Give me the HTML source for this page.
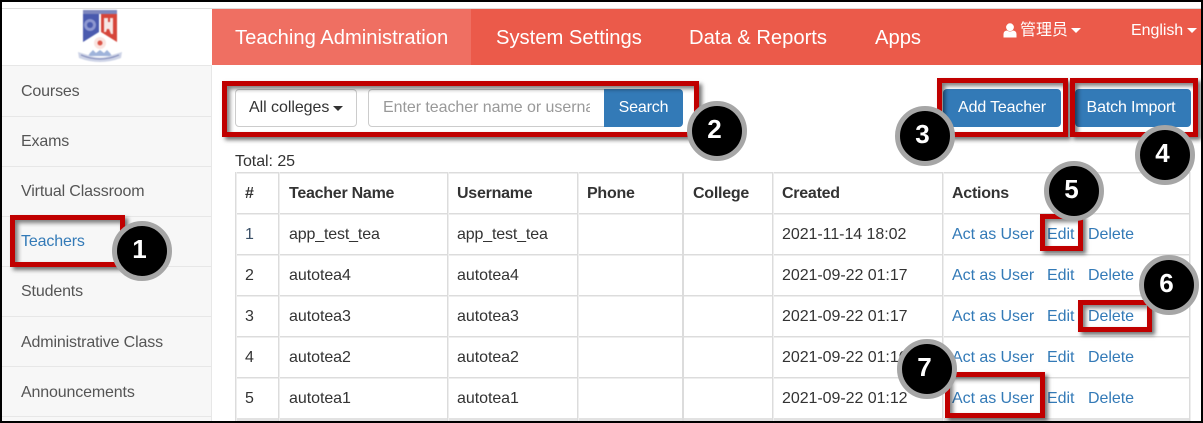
<!DOCTYPE html>
<html><head><meta charset="utf-8"><style>
html,body{margin:0;padding:0;width:1203px;height:423px;overflow:hidden;background:#fff}
body{position:relative;font-family:"Liberation Sans","Noto Sans CJK SC",sans-serif;font-size:16px;color:#333}
.a{position:absolute}
.t{position:absolute;white-space:nowrap;line-height:20px;height:20px;letter-spacing:-.05px}
.h{font-weight:bold;letter-spacing:-.25px}
.l{color:#337ab7}
.s{color:#555;left:21px;letter-spacing:-.15px}
.n{color:#fff;font-size:20.2px;line-height:28px;height:28px;top:24px;letter-spacing:0}
.hl{position:absolute;height:2px;left:235px;width:956px;background:linear-gradient(#dcdcdc 50%,#eeeeee 50%)}
.vl{position:absolute;width:2px;top:172px;height:249px;background:linear-gradient(90deg,#dcdcdc 50%,#eeeeee 50%)}
.sl{position:absolute;background:#e7e7e7;height:1px;left:2px;width:209px}
.btn{position:absolute;background:#337ab7;border-radius:4px;color:#fff;text-align:center;line-height:38px;height:38px;top:89px;letter-spacing:-.15px}
.box{position:absolute;box-sizing:border-box;border:5px solid #c00000;box-shadow:3px 3px 4px rgba(0,0,0,.55),inset 3px 3px 4px rgba(0,0,0,.5)}
.c{position:absolute;box-sizing:border-box;width:60px;height:60px;border-radius:50%;background:#000;border:5px solid #a6a6a6;color:#fff;font-weight:bold;font-size:26px;line-height:46px;text-align:center;text-indent:-5px}
.car{position:absolute;width:0;height:0;border-left:5px solid transparent;border-right:5px solid transparent;border-top:5px solid #fff}
</style></head><body>

<!-- sidebar -->
<div class="a" style="left:2px;top:66px;width:209px;height:355px;background:#f7f7f7"></div>
<div class="a" style="left:211px;top:66px;width:1px;height:355px;background:#e7e7e7"></div>
<div class="a" style="left:2px;top:8px;width:1199px;height:1px;background:#ddd"></div>
<div class="sl" style="top:65px;width:210px"></div>
<div class="sl" style="top:116px"></div><div class="sl" style="top:166px"></div><div class="sl" style="top:216px"></div><div class="sl" style="top:266px"></div><div class="sl" style="top:316px"></div><div class="sl" style="top:366px"></div><div class="sl" style="top:416px"></div>
<div class="t s" style="top:82px">Courses</div>
<div class="t s" style="top:132px">Exams</div>
<div class="t s" style="top:182px">Virtual Classroom</div>
<div class="t s" style="top:232px;color:#337ab7">Teachers</div>
<div class="t s" style="top:282px">Students</div>
<div class="t s" style="top:333px">Administrative Class</div>
<div class="t s" style="top:383px">Announcements</div>

<!-- logo -->
<svg class="a" style="left:76px;top:8px;filter:blur(.5px)" width="48" height="58" viewBox="0 0 48 58">
<path d="M7 2H41V34Q41 42 24 48Q7 42 7 34Z" fill="#fff"/>
<rect x="7" y="2" width="34" height="4" fill="#7d86bd"/>
<path d="M7 6H23V24L7 34Z" fill="#4a5aae"/>
<path d="M25 6H41V34L25 24Z" fill="#d6453a"/>
<circle cx="14" cy="17" r="6" fill="#8d97d0"/><circle cx="14" cy="17" r="3" fill="#4a5aae"/>
<path d="M28 10h4v4h2v-4h3v16h-2l-2-5h-2l-1 3h-2z" fill="#f6e6e4"/>
<circle cx="24" cy="35" r="6" fill="#f9e4e0"/><circle cx="24" cy="35" r="2.5" fill="#dc5448"/>
<path d="M14 45L17 42L20 45L24 42L28 45L31 42L34 45L36 48H12Z" fill="#9fb3da"/>
<path d="M2 44L12 47Q24 52 36 47L46 44L45 50Q24 58 3 50Z" fill="#cdd3e6"/>
<path d="M5 47Q24 55 43 47" fill="none" stroke="#7f88b8" stroke-width="1"/>
</svg>

<!-- nav -->
<div class="a" style="left:212px;top:9px;width:989px;height:56px;background:#eb5a4a"></div>
<div class="a" style="left:212px;top:9px;width:259px;height:56px;background:#ef6f62"></div>
<div class="t n" style="left:235px">Teaching Administration</div>
<div class="t n" style="left:496px">System Settings</div>
<div class="t n" style="left:689px">Data &amp; Reports</div>
<div class="t n" style="left:875px">Apps</div>
<svg class="a" style="left:1003px;top:23px" width="14" height="15" viewBox="0 0 14 15"><circle cx="7" cy="4.2" r="3.9" fill="#fff"/><path d="M0.5 14.5V11Q0.5 8 4 7.5Q7 9.5 10 7.5Q13.5 8 13.5 11V14.5Z" fill="#fff"/></svg>
<div class="t" style="left:1020px;top:21px;color:#fff">管理员</div>
<div class="car" style="left:1071px;top:28px"></div>
<div class="t" style="left:1131px;top:21px;color:#fff">English</div>
<div class="car" style="left:1187px;top:28px"></div>

<!-- controls -->
<div class="a" style="left:235px;top:89px;width:122px;height:38px;box-sizing:border-box;border:1px solid #ccc;border-radius:4px"></div>
<div class="t" style="left:249px;top:98px">All colleges</div>
<div class="car" style="left:333px;top:106px;border-top-color:#333"></div>
<div class="a" style="left:368px;top:89px;width:240px;height:38px;box-sizing:border-box;border:1px solid #ccc;border-radius:4px"></div>
<div class="t" style="left:383px;top:98px;width:207px;overflow:hidden;color:#999">Enter teacher name or username</div>
<div class="btn" style="left:604px;width:79px;border-radius:0 4px 4px 0">Search</div>
<div class="btn" style="left:943px;width:118px">Add Teacher</div>
<div class="btn" style="left:1075px;width:116px;text-indent:-4px">Batch Import</div>
<div class="t" style="left:235px;top:152px">Total: 25</div>

<!-- table -->
<div class="hl" style="top:172px"></div><div class="hl" style="top:213px"></div><div class="hl" style="top:254px"></div><div class="hl" style="top:295px"></div><div class="hl" style="top:336px"></div><div class="hl" style="top:377px"></div><div class="hl" style="top:418px;height:3px;background:#e2e2e2"></div>
<div class="vl" style="left:235px"></div><div class="vl" style="left:278px"></div><div class="vl" style="left:447px"></div><div class="vl" style="left:577px"></div><div class="vl" style="left:682px;background:#dcdcdc"></div><div class="vl" style="left:772px"></div><div class="vl" style="left:942px"></div><div class="vl" style="left:1189px"></div>

<div class="t h" style="left:245px;top:184px">#</div>
<div class="t h" style="left:289px;top:184px">Teacher Name</div>
<div class="t h" style="left:457px;top:184px">Username</div>
<div class="t h" style="left:587px;top:184px">Phone</div>
<div class="t h" style="left:693px;top:184px">College</div>
<div class="t h" style="left:782px;top:184px">Created</div>
<div class="t h" style="left:952px;top:184px">Actions</div>

<div class="t" style="left:245px;top:225px;color:#3a4f66">1</div>
<div class="t" style="left:289px;top:225px;letter-spacing:-.15px">app_test_tea</div><div class="t" style="left:457px;top:225px;letter-spacing:-.15px">app_test_tea</div><div class="t" style="left:782px;top:225px">2021-11-14 18:02</div>
<div class="t l" style="left:952px;top:225px">Act as User</div><div class="t l" style="left:1047px;top:225px">Edit</div><div class="t l" style="left:1088px;top:225px">Delete</div>

<div class="t" style="left:245px;top:266px">2</div>
<div class="t" style="left:289px;top:266px">autotea4</div><div class="t" style="left:457px;top:266px">autotea4</div><div class="t" style="left:782px;top:266px">2021-09-22 01:17</div>
<div class="t l" style="left:952px;top:266px">Act as User</div><div class="t l" style="left:1047px;top:266px">Edit</div><div class="t l" style="left:1088px;top:266px">Delete</div>

<div class="t" style="left:245px;top:307px">3</div>
<div class="t" style="left:289px;top:307px">autotea3</div><div class="t" style="left:457px;top:307px">autotea3</div><div class="t" style="left:782px;top:307px">2021-09-22 01:17</div>
<div class="t l" style="left:952px;top:307px">Act as User</div><div class="t l" style="left:1047px;top:307px">Edit</div><div class="t l" style="left:1088px;top:307px">Delete</div>

<div class="t" style="left:245px;top:348px">4</div>
<div class="t" style="left:289px;top:348px">autotea2</div><div class="t" style="left:457px;top:348px">autotea2</div><div class="t" style="left:782px;top:348px">2021-09-22 01:16</div>
<div class="t l" style="left:952px;top:348px">Act as User</div><div class="t l" style="left:1047px;top:348px">Edit</div><div class="t l" style="left:1088px;top:348px">Delete</div>

<div class="t" style="left:245px;top:389px">5</div>
<div class="t" style="left:289px;top:389px">autotea1</div><div class="t" style="left:457px;top:389px">autotea1</div><div class="t" style="left:782px;top:389px">2021-09-22 01:12</div>
<div class="t l" style="left:952px;top:389px">Act as User</div><div class="t l" style="left:1047px;top:389px">Edit</div><div class="t l" style="left:1088px;top:389px">Delete</div>

<!-- callout boxes -->
<div class="box" style="left:10px;top:215px;width:115px;height:52px"></div>
<div class="box" style="left:222px;top:81px;width:477px;height:56px"></div>
<div class="box" style="left:937px;top:78px;width:131px;height:59px"></div>
<div class="box" style="left:1070px;top:78px;width:128px;height:59px"></div>
<div class="box" style="left:1040px;top:214px;width:43px;height:37px"></div>
<div class="box" style="left:1078px;top:300px;width:74px;height:32px"></div>
<div class="box" style="left:945px;top:372px;width:100px;height:46px"></div>

<!-- number circles -->
<div class="c" style="left:112px;top:221px">1</div>
<div class="c" style="left:687px;top:101px">2</div>
<div class="c" style="left:895px;top:106px">3</div>
<div class="c" style="left:1135px;top:125px">4</div>
<div class="c" style="left:1044px;top:161px">5</div>
<div class="c" style="left:1139px;top:255px">6</div>
<div class="c" style="left:897px;top:339px">7</div>

<!-- screenshot frame -->
<div class="a" style="left:0;top:0;width:1203px;height:2px;background:#000"></div>
<div class="a" style="left:0;top:421px;width:1203px;height:2px;background:#000"></div>
<div class="a" style="left:0;top:0;width:2px;height:423px;background:#000"></div>
<div class="a" style="left:1201px;top:0;width:2px;height:423px;background:#000"></div>
</body></html>
